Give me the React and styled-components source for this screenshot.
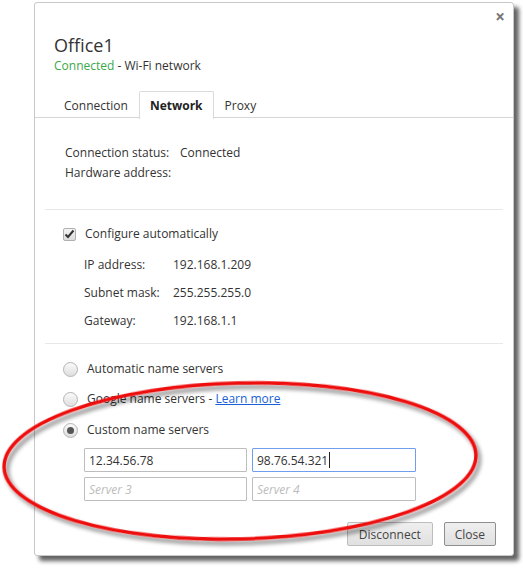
import React from "react";
import styled, { createGlobalStyle } from "styled-components";

const Global = createGlobalStyle`
  html, body { margin: 0; padding: 0; background: #fff; }
  body { font-family: "Open Sans", "Noto Sans", sans-serif; font-size: 12px; color: #333; }
  * { box-sizing: border-box; }
`;

const Page = styled.div`
  position: relative;
  width: 523px;
  height: 569px;
  padding: 2px 0 0 34px;
`;

const Dialog = styled.div`
  width: 480px;
  height: 554px;
  background: #fff;
  border: 1px solid #c8c8c8;
  border-radius: 3px;
  box-shadow: 5px 5px 4px rgba(60, 60, 60, 0.8);
  display: flex;
  flex-direction: column;
`;

const Header = styled.div`
  display: flex;
  justify-content: space-between;
  padding: 0 8px 0 19px;
`;

const TitleBlock = styled.div`
  padding-top: 30px;
`;

const Title = styled.div`
  font-size: 18px;
  line-height: 24px;
  color: #333;
`;

const Subtitle = styled.div`
  font-size: 12px;
  line-height: 18px;
  color: #333;
`;

const Green = styled.span`
  color: #3aa84a;
`;

const CloseX = styled.div`
  padding-top: 6px;
  font-size: 17px;
  font-weight: bold;
  color: #777;
  line-height: 16px;
`;

const Tabs = styled.div`
  margin-top: 16px;
  display: flex;
  padding-left: 18px;
  border-bottom: 1px solid #d6d6d6;
  height: 27px;
`;

const Tab = styled.div`
  height: 27px;
  padding: 0 10px;
  display: flex;
  align-items: center;
  font-weight: ${(p) => (p.$active ? 700 : 400)};
  color: ${(p) => (p.$active ? "#222" : "#333")};
  background: ${(p) => (p.$active ? "#fff" : "transparent")};
  border: 1px solid ${(p) => (p.$active ? "#dadada" : "transparent")};
  border-bottom: none;
  border-radius: 2px 2px 0 0;
  margin-bottom: -1px;
  ${(p) => p.$active && "height: 28px; padding-bottom: 1px;"}
`;

const Section = styled.div`
  margin: 0 10px;
  padding: ${(p) => p.$pad || "0"};
  border-bottom: ${(p) => (p.$line ? "1px solid #e8e8e8" : "none")};
  display: flex;
  flex-direction: column;
  gap: ${(p) => p.$gap || "0"};
`;

const InfoRow = styled.div`
  display: flex;
  line-height: 20px;
  padding-left: 20px;
`;

const InfoLabel = styled.span`
  width: ${(p) => p.$w || "auto"};
  flex: none;
`;

const CheckRow = styled.label`
  display: flex;
  align-items: center;
  gap: 9px;
  padding-left: 18px;
  line-height: 20px;
`;

const Checkbox = styled.span`
  width: 13px;
  height: 13px;
  border: 1px solid #b0b0b0;
  border-radius: 2px;
  background: linear-gradient(#f4f4f4, #dcdcdc);
  display: flex;
  align-items: center;
  justify-content: center;
`;

const FieldRow = styled.div`
  display: flex;
  padding-left: 39px;
  line-height: 20px;
  margin-top: ${(p) => p.$mt || "0"};
`;

const RadioRow = styled.div`
  display: flex;
  align-items: center;
  gap: 9px;
  padding-left: 18px;
  line-height: 20px;
  margin-top: ${(p) => p.$mt || "0"};
`;

const Radio = styled.span`
  width: 15px;
  height: 15px;
  border-radius: 50%;
  border: 1px solid #b4b4b4;
  background: linear-gradient(#fafafa, #dedede);
  display: flex;
  align-items: center;
  justify-content: center;
  &::after {
    content: "";
    display: ${(p) => (p.$checked ? "block" : "none")};
    width: 7px;
    height: 7px;
    border-radius: 50%;
    background: #555;
  }
`;

const Link = styled.a`
  color: #1a5fd6;
  text-decoration: underline;
  cursor: pointer;
`;

const InputGrid = styled.div`
  display: grid;
  grid-template-columns: 163px 164px;
  column-gap: 5px;
  row-gap: 5px;
  padding-left: 39px;
  margin-top: 8px;
`;

const Input = styled.div`
  height: 24px;
  border: 1px solid ${(p) => (p.$focus ? "#6f9ef0" : "#bdbdbd")};
  border-radius: 1px;
  padding: 0 4px;
  display: flex;
  align-items: center;
  font-size: 12px;
  color: ${(p) => (p.$placeholder ? "#bcbcbc" : "#333")};
  font-style: ${(p) => (p.$placeholder ? "italic" : "normal")};
`;

const Caret = styled.span`
  display: inline-block;
  width: 1px;
  height: 16px;
  background: #222;
  margin-left: 1px;
`;

const Footer = styled.div`
  margin-top: auto;
  display: flex;
  justify-content: flex-end;
  gap: 11px;
  padding: 0 17px 9px 0;
`;

const Button = styled.button`
  height: 24px;
  padding: 0 ${(p) => p.$px || "10px"};
  font-family: inherit;
  font-size: 12px;
  color: #444;
  background: linear-gradient(#efefef, #e0e0e0);
  border: 1px solid ${(p) => (p.$dim ? "#bdbdbd" : "#8e8e8e")};
  border-radius: 2px;
`;

const Overlay = styled.svg`
  position: absolute;
  left: 0;
  top: 0;
  pointer-events: none;
`;

export default function App() {
  return (
    <Page>
      <Global />
      <Dialog>
        <Header>
          <TitleBlock>
            <Title>Office1</Title>
            <Subtitle>
              <Green>Connected</Green> - Wi-Fi network
            </Subtitle>
          </TitleBlock>
          <CloseX>×</CloseX>
        </Header>
        <Tabs>
          <Tab>Connection</Tab>
          <Tab $active>Network</Tab>
          <Tab>Proxy</Tab>
        </Tabs>
        <Section $line $pad="25px 0 26px" $gap="0">
          <InfoRow>
            <InfoLabel $w="115px">Connection status:</InfoLabel>
            <span>Connected</span>
          </InfoRow>
          <InfoRow>
            <InfoLabel>Hardware address:</InfoLabel>
          </InfoRow>
        </Section>
        <Section $line $pad="14px 0 12px" $gap="8px">
          <CheckRow>
            <Checkbox>
              <svg width="11" height="10" viewBox="0 0 11 10">
                <path d="M1.5 5.5 L4 8 L9.5 1.5" fill="none" stroke="#333" strokeWidth="2" />
              </svg>
            </Checkbox>
            Configure automatically
          </CheckRow>
          <FieldRow $mt="3px">
            <InfoLabel $w="89px">IP address:</InfoLabel>
            <span>192.168.1.209</span>
          </FieldRow>
          <FieldRow>
            <InfoLabel $w="89px">Subnet mask:</InfoLabel>
            <span>255.255.255.0</span>
          </FieldRow>
          <FieldRow>
            <InfoLabel $w="89px">Gateway:</InfoLabel>
            <span>192.168.1.1</span>
          </FieldRow>
        </Section>
        <Section $pad="15px 0 0" $gap="10px">
          <RadioRow>
            <Radio />
            Automatic name servers
          </RadioRow>
          <RadioRow>
            <Radio />
            <span>
              Google name servers - <Link>Learn more</Link>
            </span>
          </RadioRow>
          <RadioRow $mt="1px">
            <Radio $checked />
            Custom name servers
          </RadioRow>
        </Section>
        <Section>
          <InputGrid>
            <Input>12.34.56.78</Input>
            <Input $focus>
              98.76.54.321
              <Caret />
            </Input>
            <Input $placeholder>Server 3</Input>
            <Input $placeholder>Server 4</Input>
          </InputGrid>
        </Section>
        <Footer>
          <Button $dim $px="11px">Disconnect</Button>
          <Button $px="10px">Close</Button>
        </Footer>
      </Dialog>
      <Overlay width="523" height="569" viewBox="0 0 523 569">
        <defs>
          <filter id="sh" x="-10%" y="-10%" width="120%" height="130%">
            <feGaussianBlur in="SourceAlpha" stdDeviation="2" />
            <feOffset dx="3" dy="4" result="b" />
            <feComponentTransfer>
              <feFuncA type="linear" slope="0.5" />
            </feComponentTransfer>
            <feMerge>
              <feMergeNode />
              <feMergeNode in="SourceGraphic" />
            </feMerge>
          </filter>
        </defs>
        <ellipse
          cx="240"
          cy="461"
          rx="236"
          ry="78"
          transform="rotate(-1.5 240 461)"
          fill="none"
          stroke="#ee1111"
          strokeWidth="3.5"
          filter="url(#sh)"
        />
      </Overlay>
    </Page>
  );
}
